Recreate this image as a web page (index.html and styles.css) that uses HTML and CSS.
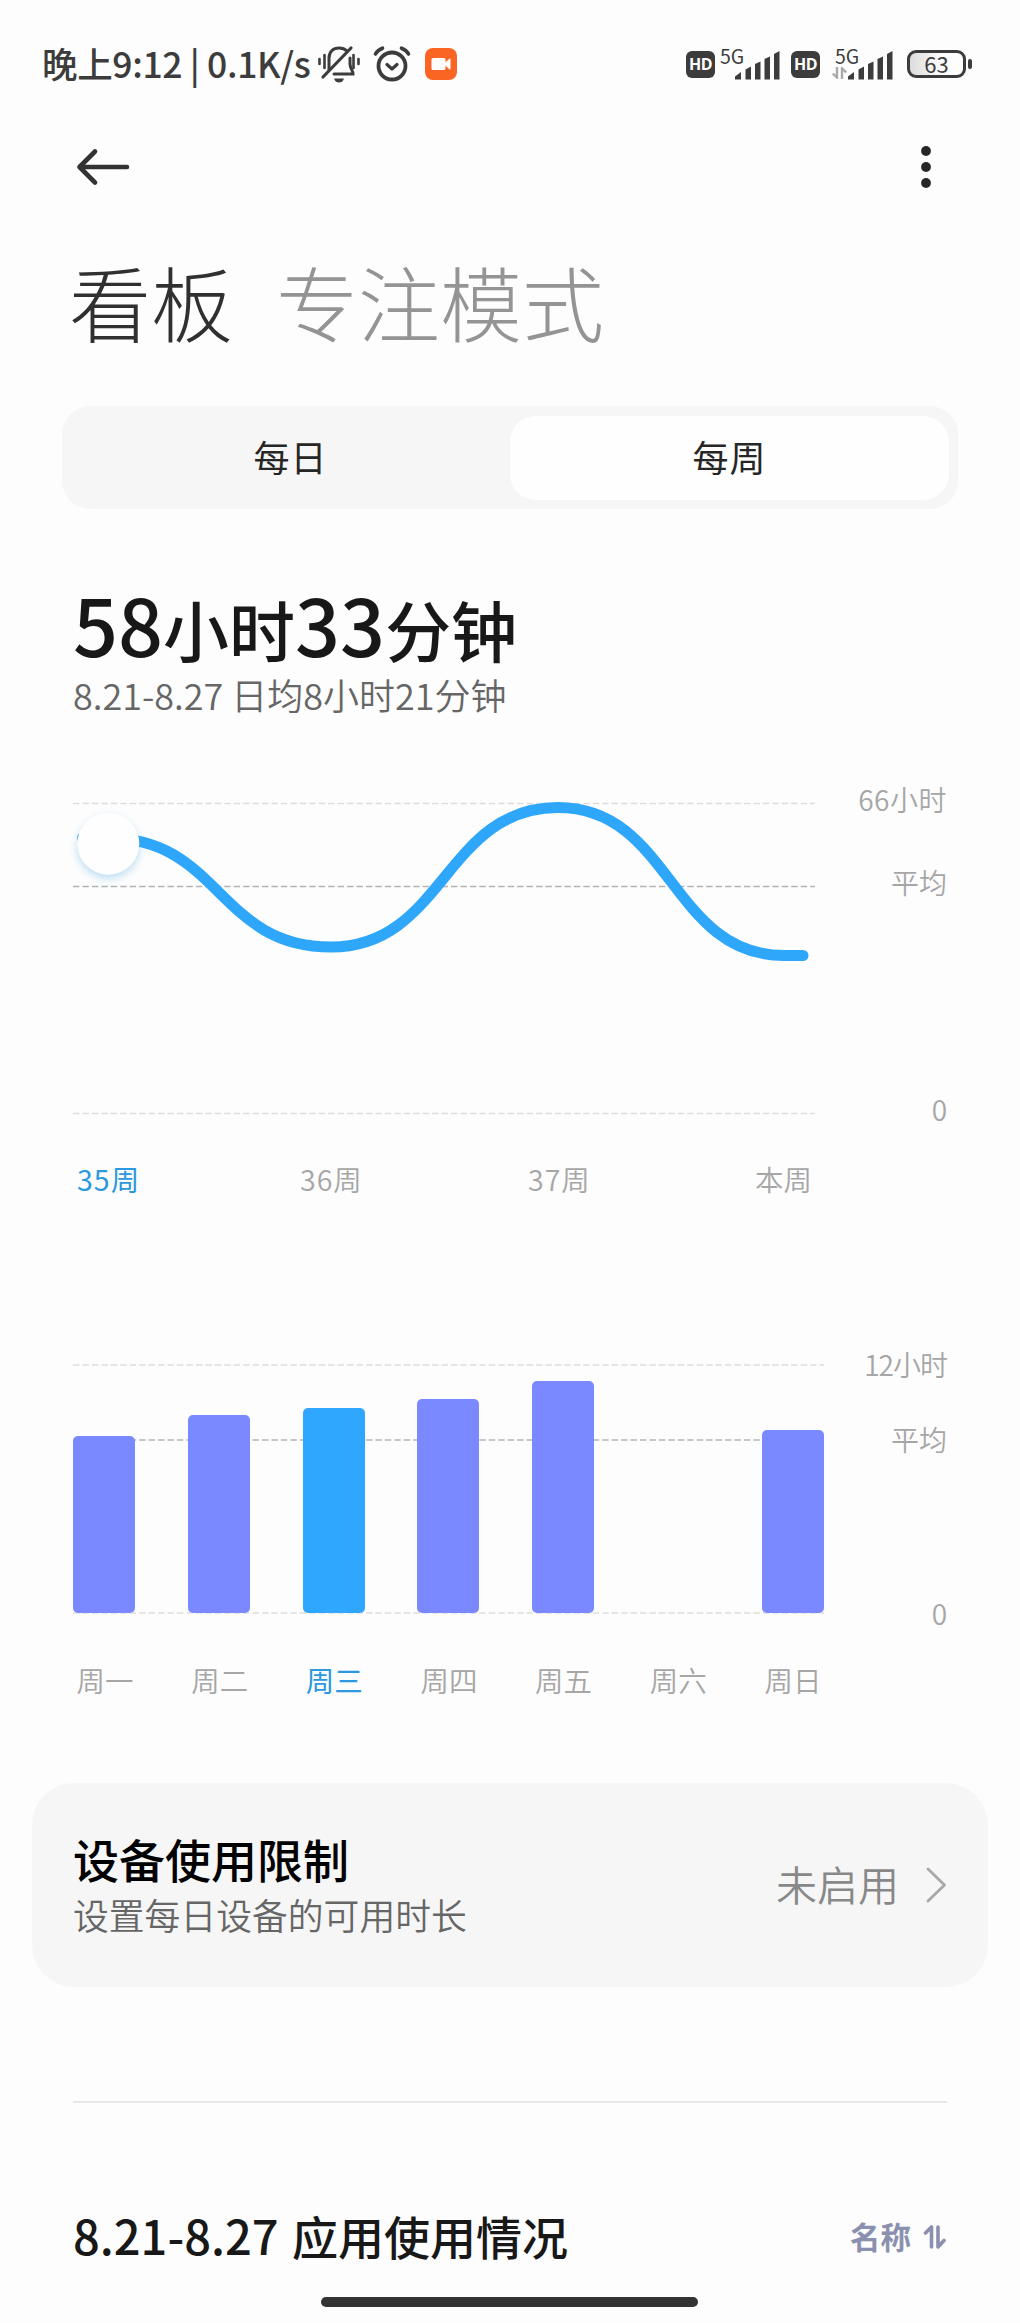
FILE: index.html
```html
<!DOCTYPE html>
<html lang="zh-CN">
<head>
<meta charset="utf-8">
<title>屏幕使用时间</title>
<link rel="stylesheet" href="styles.css">
</head>
<body>
<div class="screen">
  <div class="status">
    <span class="clock">晚上9:12 | 0.1K/s</span>
    <svg class="bell" width="44" height="38" viewBox="0 0 44 38" fill="none" stroke="#3c3c3c" stroke-width="3" stroke-linecap="round">
      <path d="M2.500 14v5M7.500 10v13M36.500 10v13M41.500 14v5" stroke-width="2.600"/>
      <path d="M12 25V13C12 7 16 3 22 3c4 0 6 1 8 3"/>
      <path d="M33 13v6c0 5 3 6 3 10H17"/>
      <path d="M6 32L34 3" stroke-width="3.200"/>
      <path d="M17 33.500h10c-1 3-3 4-5 4s-4-1-5-4z" fill="#3c3c3c" stroke="none"/>
    </svg>
    <svg class="alarm" width="38" height="38" viewBox="0 0 38 38" fill="none" stroke="#3c3c3c" stroke-width="3.800" stroke-linecap="round">
      <circle cx="19" cy="21" r="13.500"/>
      <path d="M2.500 9C4 6 6 4.500 9.500 3.200M35.500 9C34 6 32 4.500 28.500 3.200" stroke-width="3.600"/>
      <path d="M14 19.500l5 4.500 5-4.500" stroke-width="3.200" stroke-linejoin="round"/>
    </svg>
    <svg class="rec" width="32" height="32" viewBox="0 0 32 32">
      <rect width="32" height="32" rx="8" fill="#fb6524"/>
      <path d="M8 10h11a1.500 1.500 0 0 1 1.500 1.500v9A1.500 1.500 0 0 1 19 22H8a1.500 1.500 0 0 1-1.500-1.500v-9A1.500 1.500 0 0 1 8 10zM20 15l4-4c1-1 1.500-.5 1.500.5v9c0 1-.5 1.500-1.500.5l-4-4z" fill="#fff"/>
    </svg>
    <span class="hd">HD</span>
    <span class="cell">
      <span class="net">5G</span>
      <svg class="bars" width="46" height="29" viewBox="0 0 46 29" fill="#3c3c3c">
        <path d="M0 28.500v-3l6-4.500v7.500zM10.500 28.500V18.500l5.500-3v13zM20 28.500V13l5.500-2.500v18zM29.500 28.500V8L35 5.500v23zM39 28.500V3l5.500-3v28.500z"/>
      </svg>
    </span>
    <span class="hd hd-second">HD</span>
    <span class="cell cell-data">
      <span class="net">5G</span>
      <svg class="data" width="15" height="12" viewBox="0 0 15 12" fill="none" stroke="#aaa" stroke-width="2.400"><path d="M5 0v10.500L.8 6.500M10 12V1.500l4.200 4"/></svg>
      <svg class="bars" width="46" height="29" viewBox="0 0 46 29" fill="#3c3c3c">
        <path d="M0 28.500v-3l6-4.500v7.500zM10.500 28.500V18.500l5.500-3v13zM20 28.500V13l5.500-2.500v18zM29.500 28.500V8L35 5.500v23zM39 28.500V3l5.500-3v28.500z"/>
      </svg>
    </span>
    <span class="battery">63</span>
    <span class="nub"></span>
  </div>

  <div class="toolbar">
    <svg width="56" height="40" viewBox="0 0 56 40" fill="none" stroke="#333" stroke-width="4.600" stroke-linecap="round" stroke-linejoin="round"><path d="M52 20H4.500M20 4.500L4.500 20 20 35.500"/></svg>
    <svg width="12" height="44" viewBox="0 0 12 44" fill="#262626"><circle cx="6" cy="6" r="4.900"/><circle cx="6" cy="22" r="4.900"/><circle cx="6" cy="38" r="4.900"/></svg>
  </div>

  <div class="pages">
    <span class="page-on">看板</span>
    <span class="page-off">专注模式</span>
  </div>

  <div class="tabs">
    <div class="tab">每日</div>
    <div class="tab tab-on">每周</div>
  </div>

  <div class="total"><b>58</b>小时<b>33</b>分钟</div>
  <div class="average">8.21-8.27 日均8小时21分钟</div>

  <div class="weeks">
    <svg class="trend" width="760" height="350" viewBox="0 0 760 350" fill="none">
      <g stroke-width="1.600" stroke-dasharray="6.450 3">
        <path d="M13 22.500H755M13 332.500H755" stroke="#dedede"/>
        <path d="M13 105.500H755" stroke="#b4b4b4"/>
      </g>
      <path d="M22.500 57H48C160 57 158 166 271 166S385 26.500 498 26.500 611 174.500 724 174.500H743" stroke="#2ea7fb" stroke-width="11" stroke-linecap="round"/>
      <circle class="knob" cx="48.300" cy="62.700" r="31" fill="#fefefe"/>
    </svg>
    <div class="scale">
      <span class="wide">66小时</span>
      <span class="mid">平均</span>
      <span class="zero">0</span>
    </div>
  </div>
  <div class="week-names">
    <span class="on">35周</span><span>36周</span><span>37周</span><span class="current">本周</span>
  </div>

  <div class="days">
    <svg class="grid" width="751" height="268" viewBox="0 0 751 268" fill="none" stroke-width="1.600" stroke-dasharray="6.450 3">
      <path d="M0 19H751M0 267H751" stroke="#dedede"/>
      <path d="M0 94H751" stroke="#b4b4b4"/>
    </svg>
    <div class="columns">
      <i style="height:177px"></i>
      <i style="height:198px"></i>
      <i class="picked" style="height:205px"></i>
      <i style="height:214px"></i>
      <i style="height:232px"></i>
      <i style="height:0"></i>
      <i style="height:183px"></i>
    </div>
    <div class="scale">
      <span class="narrow">12小时</span>
      <span class="mid">平均</span>
      <span class="zero">0</span>
    </div>
  </div>
  <div class="day-names">
    <span>周一</span><span>周二</span><span class="on">周三</span><span>周四</span><span>周五</span><span>周六</span><span>周日</span>
  </div>

  <div class="limit">
    <div class="limit-text">
      <div class="limit-title">设备使用限制</div>
      <div class="limit-note">设置每日设备的可用时长</div>
    </div>
    <span class="limit-state">未启用</span>
    <svg width="22" height="38" viewBox="0 0 22 38" fill="none" stroke="#a8a8a8" stroke-width="2.800" stroke-linecap="round" stroke-linejoin="round"><path d="M3 3l16.500 16L3 35"/></svg>
  </div>

  <div class="rule"></div>

  <div class="usage">
    <div class="usage-title"><b>8.21-8.27</b> 应用使用情况</div>
    <span class="sort">名称</span>
    <svg width="24" height="26" viewBox="0 0 24 26" fill="none" stroke="#8a90ae" stroke-width="3.600" stroke-linecap="round" stroke-linejoin="round"><path d="M2.500 9L8.500 3v20M15 3v20l6-6.500"/></svg>
  </div>
  <div class="home"></div>
</div>
</body>
</html>
```
FILE: styles.css
```css
* { box-sizing: border-box; }

body {
  margin: 0;
  background: #fdfdfd;
  color: #262626;
  font-family: "Noto Sans CJK SC", sans-serif;
}

b, i { font-style: normal; font-weight: inherit; }
svg { display: block; flex: none; }

.screen {
  display: flex;
  flex-direction: column;
  width: 1020px;
  height: 2323px;
  overflow: hidden;
  white-space: nowrap;
}

/* status bar */
.status {
  display: flex;
  align-items: center;
  height: 128px;
  padding-left: 42px;
  color: #3c3c3c;
}
.clock {
  width: 275px;
  padding-bottom: 2px;
  font-size: 35.5px;
  font-weight: 500;
  letter-spacing: -.35px;
  line-height: 44px;
}
.alarm { margin-left: 12px; }
.rec { margin-left: 14px; }
.hd {
  width: 29px;
  height: 27px;
  margin-left: 229px;
  border-radius: 6px;
  background: #3c3c3c;
  color: #fff;
  font: 700 16px/27px "Open Sans", sans-serif;
  letter-spacing: -.5px;
  text-align: center;
}
.hd-second { margin-left: 10px; }
.cell {
  display: grid;
  width: 61px;
  height: 34px;
  margin-left: 5px;
}
.cell > * { grid-area: 1 / 1; }
.cell-data { width: 63px; margin-left: 11px; }
.net { font-size: 19.5px; line-height: 18px; }
.cell-data .net { margin-left: 4px; }
.bars { justify-self: end; align-self: end; margin: 0 0 1px; }
.data { align-self: end; margin: 0 0 2px 1px; }
.battery {
  width: 59px;
  height: 28px;
  margin-left: 13px;
  border: 3px solid #3c3c3c;
  border-radius: 9px;
  background: linear-gradient(90deg, #dcdcdc, #fdfdfd 60%);
  font-size: 22px;
  line-height: 21px;
  text-align: center;
}
.nub { width: 4px; height: 10px; margin-left: 2px; border-radius: 2px; background: #3c3c3c; }

.toolbar {
  display: flex;
  align-items: center;
  justify-content: space-between;
  height: 78px;
  padding: 0 88px 0 75px;
}

.pages {
  display: flex;
  gap: 43px;
  margin: 45px 0 0 69px;
  font-size: 82px;
  font-weight: 300;
  line-height: 100px;
}
.page-on { color: #303030; }
.page-off { color: #949494; }

.tabs {
  display: flex;
  height: 103px;
  margin: 55px 62px 0;
  padding: 10px 9px 9px;
  border-radius: 28px;
  background: #f6f6f6;
}
.tab {
  flex: 1;
  border-radius: 26px;
  font-size: 36px;
  letter-spacing: 1px;
  line-height: 81px;
  text-align: center;
}
.tab-on { background: #fefefe; }

.total {
  height: 80px;
  margin: 74px 0 0 73px;
  color: #181818;
  font-size: 66px;
  font-weight: 500;
  line-height: 80px;
}
.total b { font-size: 79px; line-height: 1; }
.average {
  margin: 11px 0 0 73px;
  color: #666;
  font-size: 36px;
  font-weight: 350;
  line-height: 40px;
}

/* charts */
.weeks {
  display: flex;
  justify-content: space-between;
  height: 350px;
  margin: 67px 73px 0 60px;
}
.knob { filter: drop-shadow(0 4px 4px rgba(60, 160, 220, .32)); }
.scale {
  display: flex;
  flex-direction: column;
  color: #a6a6a6;
  font-size: 28px;
  font-weight: 350;
  line-height: 36px;
  text-align: right;
}
.scale .wide { letter-spacing: .5px; }
.scale .narrow { letter-spacing: -1px; }
.scale .mid { margin-top: 47px; }
.scale .zero { margin-top: 191px; }
.week-names {
  display: grid;
  grid-template-columns: 223px 228px 227px auto;
  margin: 30px 0 0 77px;
  letter-spacing: 1px;
}
.week-names .current { letter-spacing: 0; }
.week-names, .day-names {
  color: #a6a6a6;
  font-size: 28.5px;
  font-weight: 350;
  line-height: 36px;
}
.on { color: #2b98e0; font-weight: 400; }

.days {
  display: grid;
  grid-template-columns: 751px 1fr;
  height: 268px;
  margin: 149px 73px 0;
}
.grid, .columns { grid-area: 1 / 1; }
.columns {
  display: flex;
  justify-content: space-between;
  align-items: flex-end;
  height: 267px;
}
.columns i { width: 62px; border-radius: 5px; background: #7a89ff; }
.columns .picked { background: #30a7ff; }
.days .mid { margin-top: 39px; }
.days .zero { margin-top: 138px; }
.day-names {
  display: flex;
  justify-content: space-between;
  width: 750px;
  margin: 48px 0 0 74px;
}
.day-names span { width: 62px; text-align: center; }

.limit {
  display: flex;
  align-items: center;
  height: 204px;
  margin: 85px 32px 0;
  padding: 0 41px;
  border-radius: 42px;
  background: #f6f6f6;
}
.limit-text { flex: 1; padding-bottom: 6px; }
.limit-title { color: #000; font-size: 46px; font-weight: 500; line-height: 56px; }
.limit-note { margin-top: 8px; color: #666; font-size: 35.8px; font-weight: 350; line-height: 40px; }
.limit-state {
  margin-right: 26px;
  padding-bottom: 5px;
  color: #888;
  font-size: 41px;
  font-weight: 350;
  line-height: 50px;
}

.rule { height: 2px; margin: 114px 73px 0; background: #e7e7e7; }

.usage {
  display: flex;
  align-items: center;
  height: 60px;
  margin: 102px 73px 0;
}
.usage-title {
  flex: 1;
  color: #181818;
  font-size: 46px;
  font-weight: 500;
  line-height: 60px;
  word-spacing: 3px;
}
.usage-title b { font-size: 47px; line-height: 1; }
.sort {
  margin-right: 12px;
  padding-top: 2px;
  color: #8a90ae;
  font-size: 30.5px;
  font-weight: 700;
  line-height: 40px;
}
.usage svg { margin-top: 4px; }
.home { width: 377px; height: 10px; margin: 32px 0 0 321px; border-radius: 5px; background: #333; }
```
